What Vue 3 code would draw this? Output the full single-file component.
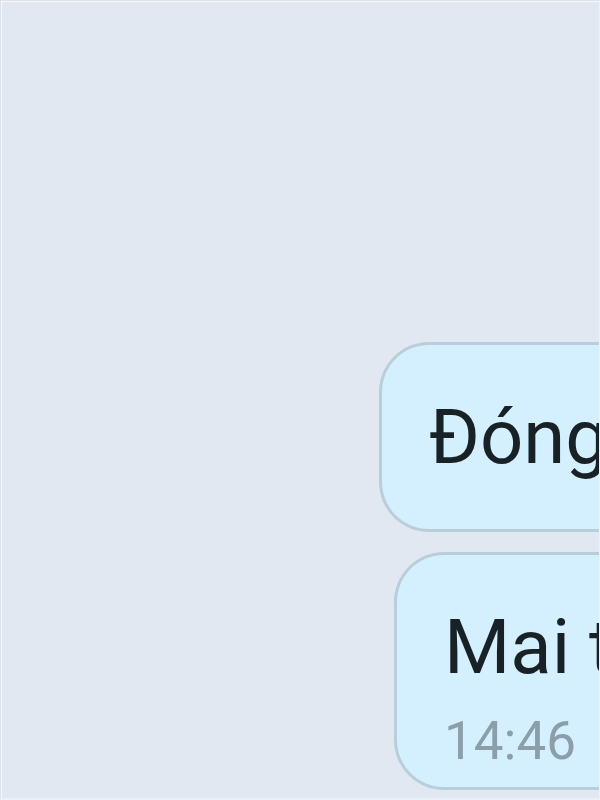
<template>
  <main class="chat">
    <div
      v-for="(msg, index) in messages"
      :key="index"
      :class="['message', { last: msg.time }]"
    >
      <p class="text">{{ msg.text }}</p>
      <time v-if="msg.time" class="time">{{ msg.time }}</time>
    </div>
  </main>
</template>

<script setup>
import { ref } from 'vue'

const messages = ref([
  { text: 'Đóng', time: '' },
  { text: 'Mai t', time: '14:46' }
])
</script>

<style>
body {
  margin: 0;
  background-color: #e1e8f2;
}
</style>

<style scoped>
.chat {
  box-sizing: border-box;
  display: flex;
  flex-direction: column;
  justify-content: flex-end;
  gap: 20px;
  min-height: 100vh;
  padding: 8px 0 8px 378px;
  overflow: hidden;
  border: 1px solid #dfe1e8;
  border-bottom-width: 2px;
  border-bottom-color: #eaf1fb;
  border-right-color: #eaf1fb;
  box-shadow: inset 1px 1px 0 #f5f8fd;
  background-color: #e1e8f2;
  font-family: Roboto, "Liberation Sans", sans-serif;
}

.message {
  padding: 48px 0 48px 47px;
  border: 3px solid #b9ced9;
  border-right: none;
  border-radius: 50px 0 0 50px;
  background-color: #d4f0ff;
  white-space: nowrap;
}

.message.last {
  margin-left: 15px;
  padding-bottom: 16px;
}

.text {
  margin: 0;
  color: #182126;
  font-size: 76px;
  line-height: 88px;
}

.time {
  display: block;
  margin-top: 20px;
  color: #8b9eaa;
  font-size: 53px;
  line-height: 60px;
}
</style>
